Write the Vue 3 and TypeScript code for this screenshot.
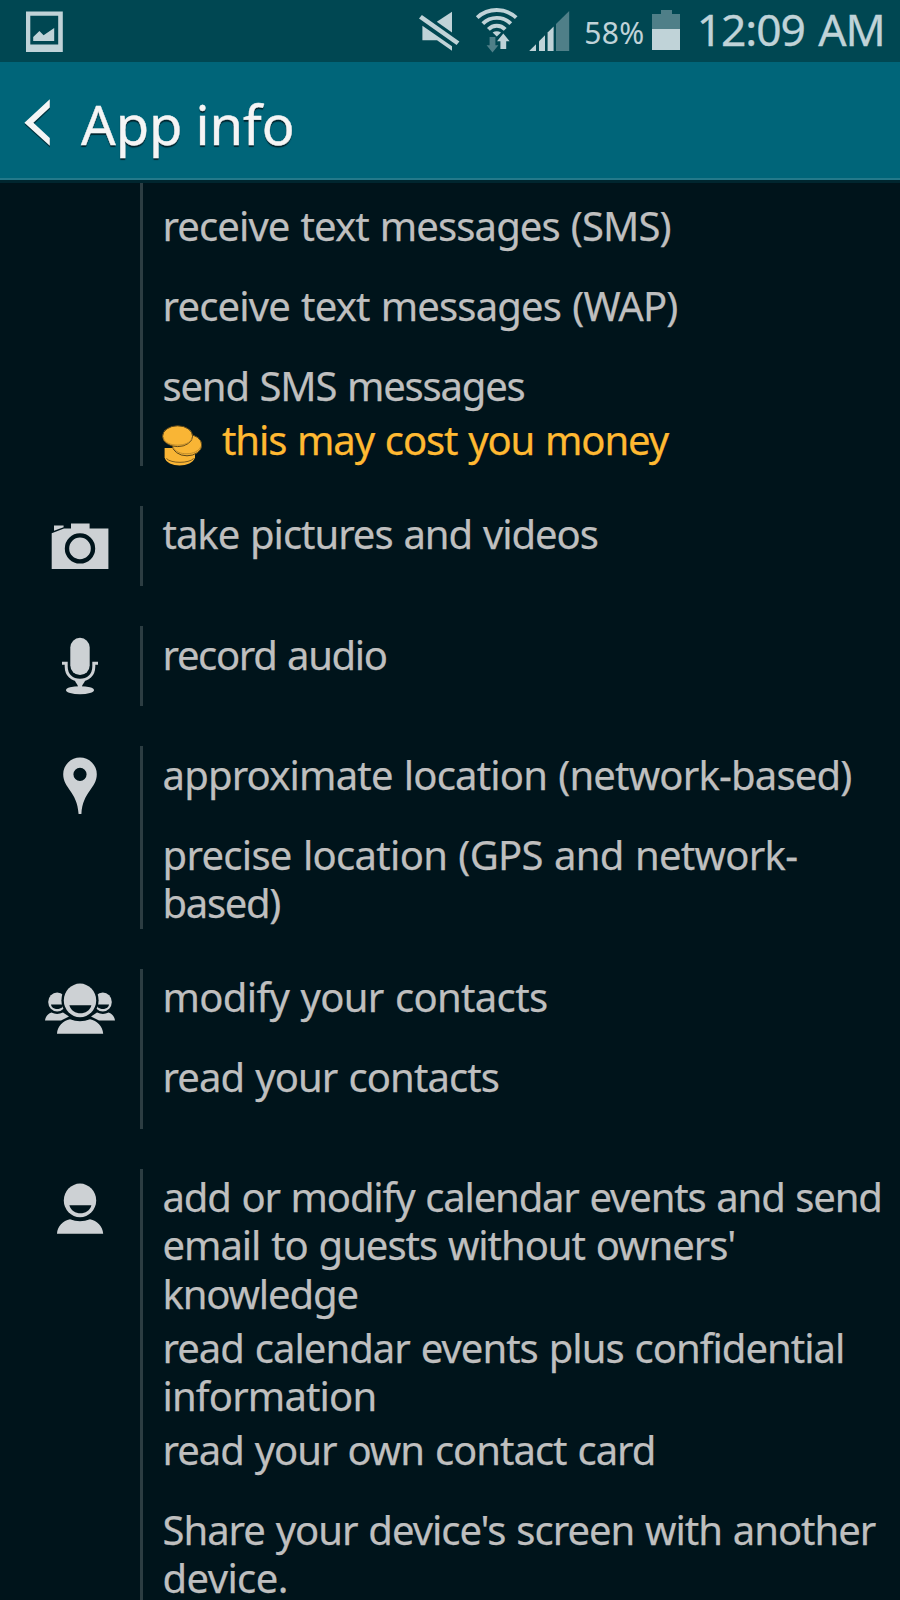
<script setup lang="ts">
type IconName = 'camera' | 'mic' | 'pin' | 'people' | 'person'

interface Line {
  text: string
  /** letter spacing in px */
  track: number
}

interface Permission {
  lines: Line[]
  cost?: boolean
}

interface Group {
  icon?: IconName
  items: Permission[]
}

const groups: Group[] = [
  {
    items: [
      { lines: [{ text: 'receive text messages (SMS)', track: -0.885 }] },
      { lines: [{ text: 'receive text messages (WAP)', track: -0.82 }] },
      { lines: [{ text: 'send SMS messages', track: -1.18 }], cost: true },
    ],
  },
  {
    icon: 'camera',
    items: [{ lines: [{ text: 'take pictures and videos', track: -1.03 }] }],
  },
  {
    icon: 'mic',
    items: [{ lines: [{ text: 'record audio', track: -1.33 }] }],
  },
  {
    icon: 'pin',
    items: [
      { lines: [{ text: 'approximate location (network-based)', track: -0.81 }] },
      {
        lines: [
          { text: 'precise location (GPS and network-', track: -0.7 },
          { text: 'based)', track: -1.3 },
        ],
      },
    ],
  },
  {
    icon: 'people',
    items: [
      { lines: [{ text: 'modify your contacts', track: -0.66 }] },
      { lines: [{ text: 'read your contacts', track: -0.9 }] },
    ],
  },
  {
    icon: 'person',
    items: [
      {
        lines: [
          { text: 'add or modify calendar events and send', track: -1.15 },
          { text: "email to guests without owners'", track: -1.04 },
          { text: 'knowledge', track: -1.14 },
        ],
      },
      {
        lines: [
          { text: 'read calendar events plus confidential', track: -0.98 },
          { text: 'information', track: -0.84 },
        ],
      },
      { lines: [{ text: 'read your own contact card', track: -1 }] },
      {
        lines: [
          { text: "Share your device's screen with another", track: -1.02 },
          { text: 'device.', track: -0.6 },
        ],
      },
    ],
  },
]
</script>

<template>
  <div class="screen">
    <div class="status">
      <svg class="shot" width="38" height="42" viewBox="26 11 38 42">
        <path fill="#c0d3d8" fill-rule="evenodd" d="M26 11.4H62.8V52H26ZM30.3 15.7V44.6H58.2V15.7Z" />
        <path fill="#c0d3d8" d="M33.2 41V37L39.4 31L43.6 35.2L54.2 28V41Z" />
      </svg>
      <svg class="signals" width="154" height="62" viewBox="418 0 154 62">
        <g fill="#c0d3d8">
          <path d="M421.9 15L459.4 41.4L456.6 45L419 18.6Z" />
          <path d="M436.8 21.8L452 11.8V32.6Z" />
          <path d="M422.4 25.8L452 46.2V50.8L437 40.2H422.4Z" />
        </g>
        <g fill="none" stroke="#c0d3d8" stroke-width="3.9">
          <path d="M477.2 17.6A29 29 0 0 1 516.2 17.6" />
          <path d="M482.8 23.6A20 20 0 0 1 510.8 23.6" />
          <path d="M488.4 29.4A11.5 11.5 0 0 1 505.2 29.4" />
        </g>
        <path fill="#c0d3d8" d="M492.6 32.6Q496.8 29.8 501 32.6L496.8 36.4Z" />
        <path fill="#4f7f88" d="M489.6 37H495.4V45.2H498.4L492.5 52.6L486.6 45.2H489.6Z" />
        <path fill="#c0d3d8" d="M503.3 33.4L509.6 41.2H506.2V49H500.4V41.2H497Z" />
        <g fill="#c0d3d8">
          <path d="M529.2 51L536 44.3V51Z" />
          <path d="M539 41.2L545 35.2V51H539Z" />
          <path d="M547.6 32.5L553.6 26.5V51H547.6Z" />
        </g>
        <path fill="#4f7f88" d="M556 24L569.2 11V51H556Z" />
      </svg>
      <span class="pct">58%</span>
      <svg class="battery" width="28" height="40" viewBox="0 0 28 40">
        <path fill="#4f7f88" d="M9 0H20V4H28V19H0V4H9Z" />
        <path fill="#c0d3d8" d="M0 19H28V40H0Z" />
      </svg>
      <span class="clock">12:09 AM</span>
    </div>

    <header class="bar">
      <svg class="back" width="30" height="54" viewBox="22 96 30 54">
        <path fill="#003440" d="M50 101.2V109L33.6 124.4L50 140V147.6L24.6 124.4Z" />
        <path fill="#f5f5f5" d="M49.8 99.2V107.4L33.4 122.8L49.8 138V145.8L24.4 122.8Z" />
      </svg>
      <h1>App info</h1>
    </header>

    <main class="list">
      <section v-for="(group, g) in groups" :key="g" class="group">
        <div class="icon">
          <svg v-if="group.icon" width="140" height="80" viewBox="0 0.6 140 80" fill="#cdd1d4">
            <template v-if="group.icon === 'camera'">
              <path d="M51.7 27.8L64 23.2H71V18H89.6V23.2H108.4V63.6H51.7Z" />
              <path d="M54 20.2H63.6V21.8L54 25.4Z" />
              <circle cx="80" cy="43" r="13" fill="none" stroke="#00141b" stroke-width="4.4" />
            </template>
            <template v-else-if="group.icon === 'mic'">
              <rect x="70.3" y="12.4" width="19.4" height="37.2" rx="9.7" />
              <path
                d="M62 37.9H66.2V41C66.2 49.5 72 54.8 80 54.8S93.8 49.5 93.8 41V37.9H98"
                fill="none" stroke="#cdd1d4" stroke-width="3"
              />
              <path d="M75 55H85C84.5 58 82 58.5 82 61.5H78C78 58.5 75.5 58 75 55Z" />
              <ellipse cx="80" cy="64.8" rx="14" ry="4" />
            </template>
            <template v-else-if="group.icon === 'pin'">
              <path
                fill-rule="evenodd"
                d="M80 12.1A16.8 16.8 0 0 1 96.8 28.9C96.8 43 82.8 46 81.4 68.6H78.6C77.2 46 63.2 43 63.2 28.9A16.8 16.8 0 0 1 80 12.1ZM80 22.3A6.6 6.6 0 1 0 80 35.5A6.6 6.6 0 1 0 80 22.3Z"
              />
            </template>
            <template v-else>
              <template v-if="group.icon === 'people'">
                <g>
                  <ellipse cx="57.2" cy="33.6" rx="9" ry="9.4" />
                  <path d="M51 36.2H63.4C62.8 42.2 51.6 42.2 51 36.2Z" fill="#00141b" />
                  <path d="M45 52.2C45.6 47.4 48.4 45.4 51.4 44.2Q57 46.8 63 44.2L69 48L61 52.2Z" />
                </g>
                <g transform="translate(160 0) scale(-1 1)">
                  <ellipse cx="57.2" cy="33.6" rx="9" ry="9.4" />
                  <path d="M51 36.2H63.4C62.8 42.2 51.6 42.2 51 36.2Z" fill="#00141b" />
                  <path d="M45 52.2C45.6 47.4 48.4 45.4 51.4 44.2Q57 46.8 63 44.2L69 48L61 52.2Z" />
                </g>
                <ellipse cx="80" cy="31.8" rx="18.6" ry="19.4" fill="#00141b" />
              </template>
              <ellipse cx="80" cy="32" rx="16.2" ry="16.8" />
              <path d="M69.4 36.8H91.4C88.6 47.6 72.2 47.6 69.4 36.8Z" fill="#00141b" />
              <path d="M57 65.4C57.4 57.4 63 52.4 70 50.8Q80 55 90 50.8C97 52.4 102.8 57.4 103.2 65.4Z" />
            </template>
          </svg>
        </div>
        <div class="items">
          <template v-for="(item, i) in group.items" :key="i">
            <div class="item" :class="{ tight: item.cost }">
              <p v-for="line in item.lines" :key="line.text" :style="{ letterSpacing: line.track + 'px' }">
                {{ line.text }}
              </p>
            </div>
            <div v-if="item.cost" class="item tight cost">
              <svg class="coins" width="40" height="42" viewBox="162 426 40 42" fill="#f9b535">
                <path d="M164.6 449V458.5C167 469 192 469 195 458.5V449Z" />
                <path d="M166.4 459.5C171 464.6 189 464.6 193.6 459.5" fill="none" stroke="#7a5a1e" stroke-width="1" />
                <ellipse cx="187" cy="446" rx="14.8" ry="10.8" stroke="#5a4519" stroke-width="1" />
                <path d="M173.4 448.6C177 457 197 457 200.8 447.6" fill="none" stroke="#c08c2b" stroke-width="1" />
                <ellipse cx="177.6" cy="437.2" rx="15" ry="10.4" stroke="#5a4519" stroke-width="1" />
                <path d="M163.6 439.4C166 448.4 189 448.4 191.8 439.4" fill="none" stroke="#c08c2b" stroke-width="1" />
              </svg>
              <p>this may cost you money</p>
            </div>
          </template>
        </div>
      </section>
    </main>
  </div>
</template>

<style>
body {
  margin: 0;
  background: #00141b;
}
</style>

<style scoped>
.screen {
  width: 900px;
  height: 1600px;
  overflow: hidden;
  display: flex;
  flex-direction: column;
  background: #00141b;
  font-family: 'Noto Sans', 'Open Sans', sans-serif;
}

svg {
  display: block;
  flex: none;
}

.status {
  flex: none;
  display: flex;
  box-sizing: border-box;
  height: 62px;
  padding-left: 26px;
  background: #004752;
  color: #c0d3d8;
  white-space: nowrap;
}

.shot {
  margin-top: 11px;
}

.signals {
  margin-left: 354px;
}

.pct {
  width: 67px;
  margin: 11px 0 0 12.2px;
  font-size: 30px;
  line-height: 43px;
  letter-spacing: 0.34px;
}

.battery {
  margin: 10px 0 0 1px;
}

.clock {
  margin: -2px 0 0 16.6px;
  font-size: 44.4px;
  line-height: 62px;
  letter-spacing: -1.1px;
  word-spacing: 3px;
  -webkit-text-stroke: 0.3px #c0d3d8;
}

.bar {
  flex: none;
  display: flex;
  box-sizing: border-box;
  height: 118px;
  padding-left: 22px;
  background: #006579;
  border-bottom: 2px solid #24798a;
}

.back {
  margin-top: 34px;
}

h1 {
  margin: 24px 0 0 29px;
  font-size: 54.4px;
  line-height: 76px;
  font-weight: 400;
  letter-spacing: -0.1px;
  word-spacing: -0.8px;
  color: #f5f5f5;
  -webkit-text-stroke: 0.4px #f5f5f5;
  text-shadow: 0 2px 1px #00222b;
}

.list {
  flex: 1;
  min-height: 0;
  display: flex;
  flex-direction: column;
  gap: 40px;
  border-top: 3px solid #00262f;
  overflow: hidden;
}

.group {
  flex: none;
  display: flex;
}

.group:first-child .items {
  padding-top: 15px;
}

.icon {
  flex: none;
  width: 140px;
}

.items {
  flex: 1;
  border-left: 3px solid #2c3d42;
  padding-left: 19.5px;
}

.item {
  box-sizing: border-box;
  min-height: 80.1px;
  padding: 4.3px 0 1.5px;
}

.item.tight {
  min-height: 0;
}

.item p {
  margin: 0;
  font-size: 40px;
  line-height: 48.2px;
  word-spacing: 1.5px;
  color: #bfbfbf;
  white-space: nowrap;
  -webkit-text-stroke: 0.25px currentColor;
}

.cost {
  display: flex;
}

.coins {
  margin: 8.8px 20px -3.5px -0.5px;
}

.item.cost p {
  color: #ffb932;
  letter-spacing: -1.1px;
}
</style>
